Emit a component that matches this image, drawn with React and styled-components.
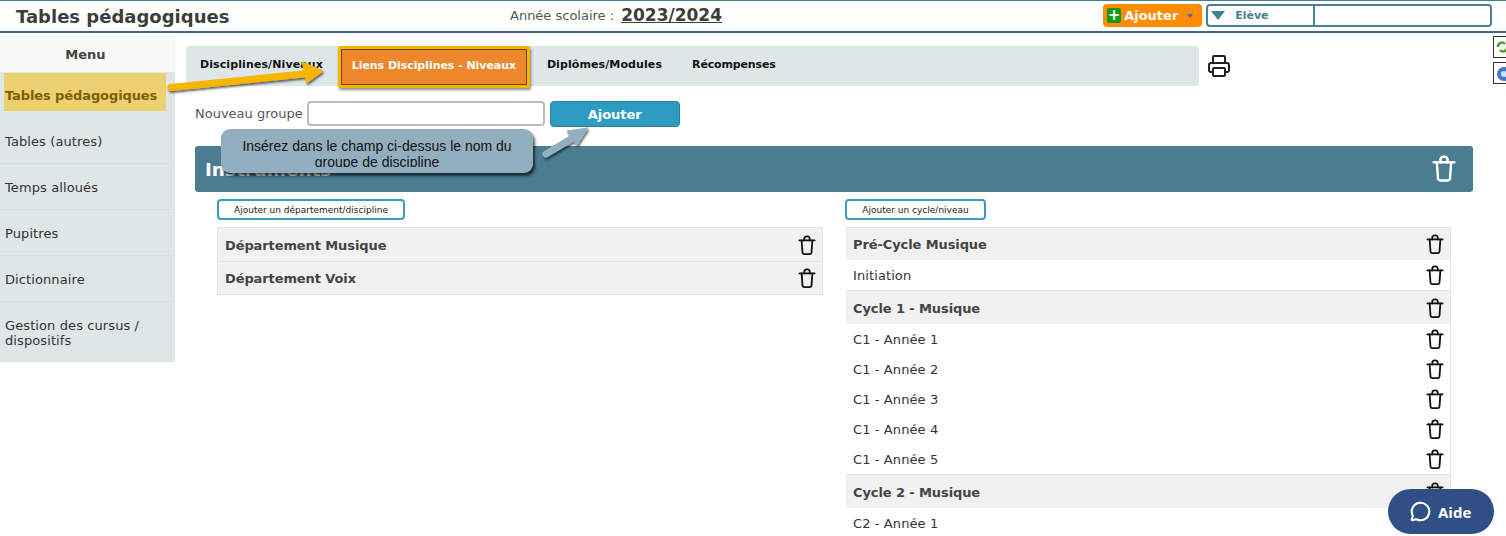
import React from 'react';
import styled, { createGlobalStyle } from 'styled-components';
import { Printer, MessageCircle } from 'lucide-react';

const GlobalStyle = createGlobalStyle`
  html, body {
    margin: 0;
    padding: 0;
    height: 536px;
    overflow: hidden;
    background: #fff;
    font-family: "DejaVu Sans", Verdana, sans-serif;
  }
`;

// Header
const Page = styled.div`
  position: relative;
  width: 1506px;
  height: 536px;
  overflow: hidden;
`;

const Header = styled.header`
  display: flex;
  align-items: center;
  height: 30px;
  border-top: 1px solid #3f7f8f;
  border-bottom: 2px solid #45638f;
  padding-left: 16px;
`;

const PageTitle = styled.h1`
  margin: 0;
  width: 494px;
  font-size: 18px;
  font-weight: 700;
  color: #3d3d3d;
`;

const YearLabel = styled.span`
  font-size: 13px;
  color: #555;
  margin-right: 7px;
  margin-top: -2px;
`;

const YearValue = styled.span`
  width: 482px;
  font-size: 17px;
  font-weight: 700;
  color: #3d3d3d;
  text-decoration: underline;
  margin-top: -3px;
`;

const AddButton = styled.div`
  display: flex;
  align-items: center;
  width: 99px;
  height: 23px;
  box-sizing: border-box;
  padding-left: 4px;
  margin-right: 4px;
  margin-top: -2px;
  background: #ff8c00;
  border-radius: 4px;
  color: #fff;
  font-size: 13px;
  font-weight: 700;
`;

const PlusBox = styled.span`
  display: flex;
  align-items: center;
  justify-content: center;
  width: 14px;
  height: 15px;
  margin-right: 3px;
  background: #0e9a0e;
  border-radius: 2px;
  font-size: 15px;
  line-height: 15px;
`;

const Caret = styled.span`
  width: 0;
  height: 0;
  margin-left: 9px;
  margin-top: 1px;
  border-left: 3px solid transparent;
  border-right: 3px solid transparent;
  border-top: 4px solid #3a6ea5;
`;

const SearchBox = styled.div`
  display: flex;
  width: 286px;
  height: 23px;
  box-sizing: border-box;
  margin-top: -2px;
  border: 2px solid #4a8090;
  border-radius: 4px;
`;

const SearchType = styled.div`
  display: flex;
  align-items: center;
  width: 102px;
  padding-left: 3px;
  border-right: 2px solid #4a8090;
  color: #4a7f92;
  font-size: 11px;
  font-weight: 700;
`;

const SearchCaret = styled.span`
  width: 0;
  height: 0;
  margin-right: 10px;
  border-left: 7px solid transparent;
  border-right: 7px solid transparent;
  border-top: 9px solid #3f7f8f;
`;

// Body
const Body = styled.div`
  display: flex;
  align-items: flex-start;
  padding-top: 2px;
`;

const Sidebar = styled.nav`
  flex: 0 0 175px;
  background: #dfe6e8;
`;

const MenuTitle = styled.div`
  height: 37px;
  line-height: 40px;
  padding-right: 4px;
  text-align: center;
  background: #f9f9f9;
  color: #444;
  font-size: 13px;
  font-weight: 700;
`;

const MenuItem = styled.div`
  display: flex;
  align-items: center;
  box-sizing: border-box;
  height: ${p => (p.$tall ? '60px' : '46px')};
  padding: 2px 20px 0 5px;
  border-bottom: ${p => (p.$tall ? '0' : '1px solid #d8dfe1')};
  color: #333;
  font-size: 13px;
  letter-spacing: 0.1px;
  line-height: 15px;
`;

const ActiveItem = styled.div`
  display: flex;
  align-items: center;
  box-sizing: border-box;
  height: 38px;
  margin: 1px 9px 7px 4px;
  padding: 6px 0 0 1px;
  background: #edd070;
  color: #7a5f08;
  font-size: 13px;
  font-weight: 700;
  letter-spacing: -0.1px;
  white-space: nowrap;
`;

const Main = styled.main`
  flex: 1;
  padding: 11px 33px 0 11px;
`;

const TabBar = styled.div`
  display: flex;
  align-items: center;
  width: 1013px;
  height: 40px;
  background: #dfe6e8;
  border-radius: 4px;
`;

const Tab = styled.div`
  margin-left: ${p => p.$gap}px;
  margin-bottom: 3px;
  color: #111;
  font-size: 11px;
  font-weight: 700;
  letter-spacing: ${p => p.$spacing ?? 0.1}px;
  white-space: nowrap;
`;

const TabActive = styled.div`
  flex: 0 0 192px;
  height: 42px;
  box-sizing: border-box;
  margin-left: 15px;
  margin-top: 1px;
  padding-bottom: 3px;
  display: flex;
  align-items: center;
  justify-content: center;
  background: #ee872c;
  border: 3px solid #f7b500;
  outline: 1px solid #6a4a10;
  outline-offset: -4px;
  border-radius: 2px;
  box-shadow: 1px 2px 3px rgba(0, 0, 0, 0.45);
  color: #fff;
  font-size: 11px;
  font-weight: 700;
  letter-spacing: -0.05px;
  white-space: nowrap;
`;

const TabRow = styled.div`
  display: flex;
  align-items: center;
  gap: 8px;
`;

const FormRow = styled.div`
  display: flex;
  align-items: flex-start;
  height: 26px;
  margin: 15px 0 19px 9px;
`;

const FormLabel = styled.label`
  margin: 5px 4px 0 0;
  color: #555;
  font-size: 13px;
`;

const GroupInput = styled.input`
  width: 238px;
  height: 25px;
  box-sizing: border-box;
  margin: 0 5px 0 0;
  border: 2px solid #bbb;
  border-radius: 4px;
  background: #fff;
`;

const SubmitButton = styled.button`
  width: 130px;
  height: 26px;
  padding: 0;
  background: #2e9cc0;
  border: 1px solid #2a7f9d;
  border-radius: 4px;
  color: #fff;
  font-family: inherit;
  font-size: 13px;
  font-weight: 700;
`;

const GroupBanner = styled.div`
  display: flex;
  align-items: center;
  justify-content: space-between;
  height: 46px;
  margin-left: 9px;
  padding: 0 17px 0 10px;
  background: #4a7d8f;
  border-radius: 3px;
  color: #fff;
  font-size: 18.4px;
  font-weight: 700;
`;

const Columns = styled.div`
  display: grid;
  grid-template-columns: 606px 606px;
  column-gap: 22px;
  margin: 7px 0 0 31px;
`;

const AddLink = styled.button`
  display: block;
  height: 21px;
  width: ${p => p.$width}px;
  padding: 0;
  margin-bottom: 7px;
  background: #fff;
  border: 2px solid #3a9cc0;
  border-radius: 4px;
  color: #222;
  font-family: inherit;
  font-size: 9px;
`;

const List = styled.div`
  border: 1px solid #e6e6e6;
  border-top: 0;
  border-left: 1px solid ${p => (p.$open ? 'transparent' : '#e6e6e6')};
`;

const Row = styled.div`
  display: flex;
  align-items: center;
  justify-content: space-between;
  box-sizing: border-box;
  height: ${p => p.$h}px;
  padding: 0 6px 0 7px;
  background: #fff;
  color: #333;
  font-size: 13px;
  letter-spacing: 0.1px;
`;

const HeadRow = styled(Row)`
  padding-top: ${p => (p.$h > 33 ? 2 : 0)}px;
  background: #f1f1f1;
  border-top: 1px solid #e3e3e3;
  color: #444;
  font-weight: 700;
  letter-spacing: -0.1px;
`;

// Overlays
const Overlay = styled.svg`
  position: absolute;
  left: 0;
  top: 0;
  pointer-events: none;
`;

const Bubble = styled.div`
  position: absolute;
  left: 221px;
  top: 129px;
  width: 312px;
  height: 44px;
  box-sizing: border-box;
  padding: 9px 10px 0;
  background: #92afc0;
  border-radius: 9px;
  box-shadow: 2px 3px 3px rgba(0, 0, 0, 0.65);
`;

const BubbleText = styled.div`
  height: 29px;
  overflow: hidden;
  color: #111;
  font-family: "Liberation Sans", Arial, sans-serif;
  font-size: 14px;
  line-height: 16px;
  text-align: center;
`;

const SideTool = styled.div`
  position: absolute;
  left: 1493px;
  top: ${p => p.$top}px;
  width: 14px;
  height: 22px;
  box-sizing: border-box;
  padding: 2px 0 0 2px;
  background: #fff;
  border: 1px solid #333;
`;

const HelpButton = styled.div`
  position: absolute;
  left: 1388px;
  top: 489px;
  display: flex;
  align-items: center;
  gap: 7px;
  width: 106px;
  height: 45px;
  box-sizing: border-box;
  padding-left: 22px;
  background: #304f86;
  border-radius: 23px;
  color: #fff;
  font-family: "Open Sans", sans-serif;
  font-size: 15px;
  font-weight: 700;
`;

const TrashIcon = ({ size = 18, color = '#111' }) => (
  <svg width={size} height={size * 1.15} viewBox="0 0 20 23" fill="none" stroke={color} strokeWidth="2" strokeLinecap="round" strokeLinejoin="round">
    <path d="M1.5 6h17" />
    <path d="M4 6l1 13.5a2 2 0 0 0 2 1.7h6a2 2 0 0 0 2-1.7L16 6" />
    <path d="M7 6V4a2.5 2.5 0 0 1 2.5-2.5h1A2.5 2.5 0 0 1 13 4v2" />
  </svg>
);

const rightRows = [
  { label: 'Pré-Cycle Musique', head: true, h: 33 },
  { label: 'Initiation', h: 30 },
  { label: 'Cycle 1 - Musique', head: true, h: 34 },
  { label: 'C1 - Année 1', h: 30 },
  { label: 'C1 - Année 2', h: 30 },
  { label: 'C1 - Année 3', h: 30 },
  { label: 'C1 - Année 4', h: 30 },
  { label: 'C1 - Année 5', h: 30 },
  { label: 'Cycle 2 - Musique', head: true, h: 34 },
  { label: 'C2 - Année 1', h: 30 },
];

const ListRow = ({ label, head, h }) => {
  const Comp = head ? HeadRow : Row;
  return (
    <Comp $h={h}>
      {label}
      <TrashIcon />
    </Comp>
  );
};

export default function App() {
  return (
    <Page>
      <GlobalStyle />
      <Header>
        <PageTitle>Tables pédagogiques</PageTitle>
        <YearLabel>Année scolaire :</YearLabel>
        <YearValue>2023/2024</YearValue>
        <AddButton>
          <PlusBox>+</PlusBox>
          Ajouter
          <Caret />
        </AddButton>
        <SearchBox>
          <SearchType>
            <SearchCaret />
            Elève
          </SearchType>
        </SearchBox>
      </Header>

      <Body>
        <Sidebar>
          <MenuTitle>Menu</MenuTitle>
          <ActiveItem>Tables pédagogiques</ActiveItem>
          <MenuItem>Tables (autres)</MenuItem>
          <MenuItem>Temps alloués</MenuItem>
          <MenuItem>Pupitres</MenuItem>
          <MenuItem>Dictionnaire</MenuItem>
          <MenuItem $tall>Gestion des cursus / dispositifs</MenuItem>
        </Sidebar>

        <Main>
          <TabRow>
            <TabBar>
              <Tab $gap={14}>Disciplines/Niveaux</Tab>
              <TabActive>Liens Disciplines - Niveaux</TabActive>
              <Tab $gap={17}>Diplômes/Modules</Tab>
              <Tab $gap={30} $spacing={-0.15}>Récompenses</Tab>
            </TabBar>
            <Printer size={24} color="#222" strokeWidth={2} />
          </TabRow>

          <FormRow>
            <FormLabel>Nouveau groupe</FormLabel>
            <GroupInput />
            <SubmitButton>Ajouter</SubmitButton>
          </FormRow>

          <GroupBanner>
            Instruments
            <TrashIcon size={24} color="#fff" />
          </GroupBanner>

          <Columns>
            <div>
              <AddLink $width={188}>Ajouter un département/discipline</AddLink>
              <List>
                <ListRow label="Département Musique" head h={34} />
                <ListRow label="Département Voix" head h={33} />
              </List>
            </div>
            <div>
              <AddLink $width={141}>Ajouter un cycle/niveau</AddLink>
              <List $open>
                {rightRows.map(row => (
                  <ListRow key={row.label} {...row} />
                ))}
              </List>
            </div>
          </Columns>
        </Main>
      </Body>

      <Overlay width="1506" height="536">
        <defs>
          <filter id="arrowShadow" x="-20%" y="-50%" width="140%" height="200%">
            <feDropShadow dx="1" dy="2" stdDeviation="1.2" floodColor="#000" floodOpacity="0.6" />
          </filter>
        </defs>
        <g filter="url(#arrowShadow)">
          <path d="M171 87.5L308 73.5" stroke="#f7b500" strokeWidth="7" strokeLinecap="round" />
          <path d="M322 71L303 63L307 82Z" fill="#f7b500" stroke="#f7b500" strokeWidth="2" strokeLinejoin="round" />
          <path d="M546 154L576 136" stroke="#92afc0" strokeWidth="7" strokeLinecap="round" />
          <path d="M588 128L567 131L577 145Z" fill="#92afc0" stroke="#92afc0" strokeLinejoin="round" />
        </g>
      </Overlay>

      <Bubble>
        <BubbleText>Insérez dans le champ ci-dessus le nom du groupe de discipline</BubbleText>
      </Bubble>

      <SideTool $top={36}>
        <svg width="12" height="16" viewBox="0 0 12 16" fill="none" stroke="#4ea01e" strokeWidth="2.4">
          <path d="M2 8a4 4 0 0 1 7-3M11 8a4 4 0 0 1-7 3" />
        </svg>
      </SideTool>
      <SideTool $top={62}>
        <svg width="12" height="16" viewBox="0 0 12 16">
          <circle cx="8" cy="9" r="7" fill="#3f78d0" />
          <circle cx="8" cy="9" r="3" fill="#cfe0f7" />
        </svg>
      </SideTool>

      <HelpButton>
        <MessageCircle size={21} strokeWidth={2.4} />
        Aide
      </HelpButton>
    </Page>
  );
}
